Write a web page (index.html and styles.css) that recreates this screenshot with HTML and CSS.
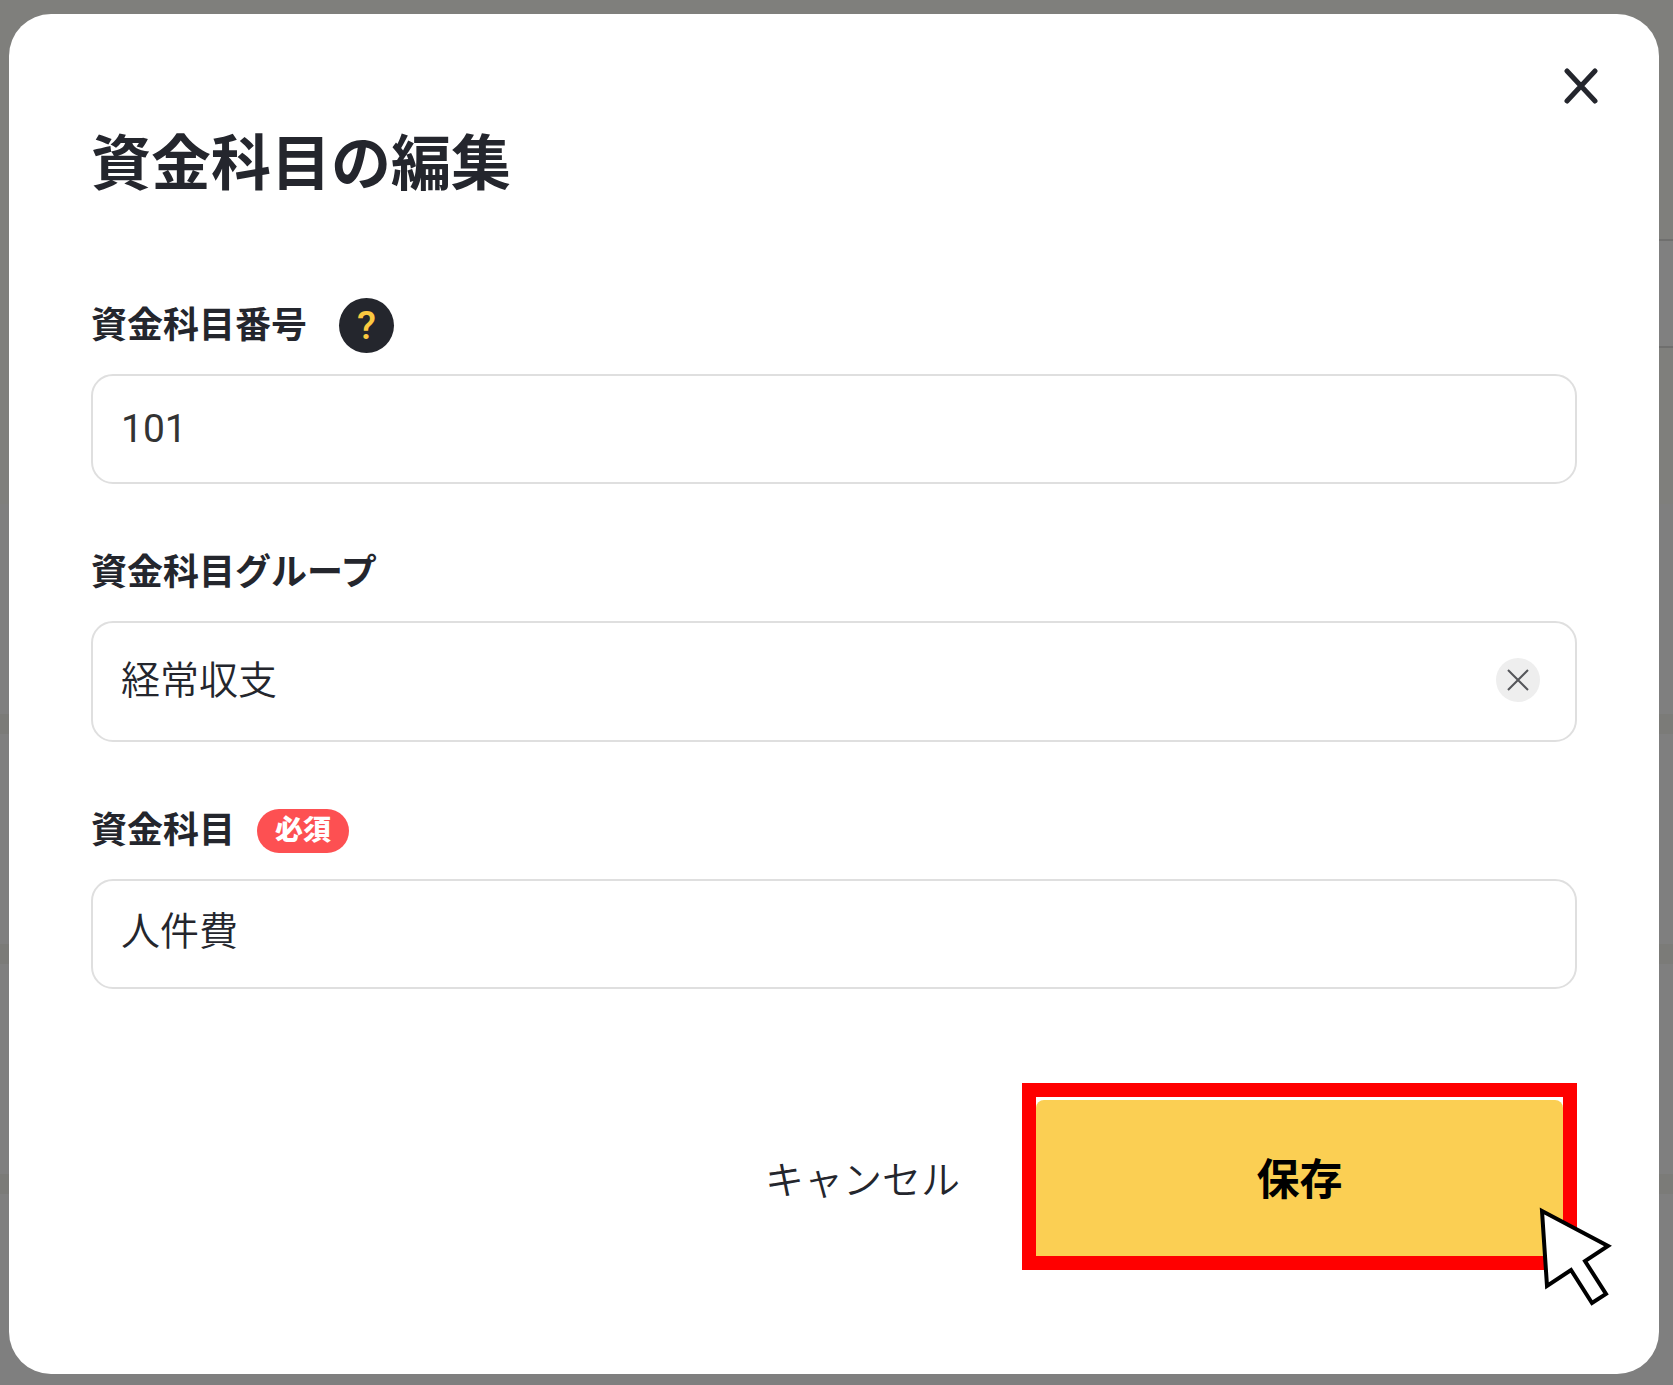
FILE: index.html
```html
<!DOCTYPE html>
<html lang="ja">
<head>
  <meta charset="UTF-8">
  <meta name="viewport" content="width=device-width, initial-scale=1.0">
  <title>資金科目の編集</title>
  <link rel="stylesheet" href="styles.css">
</head>
<body>
  <div class="page">
    <!-- dimmed page behind the dialog -->
    <div class="backdrop">
      <div class="backdrop-head">
        <div class="backdrop-bar"></div>
      </div>
      <div class="backdrop-row"></div>
      <div class="backdrop-row"></div>
      <div class="backdrop-row"></div>
      <div class="backdrop-row last"></div>
    </div>

    <div class="modal" role="dialog" aria-labelledby="modalTitle">
      <button type="button" class="close-btn" aria-label="閉じる">
        <svg width="36" height="36" viewBox="0 0 36 36">
          <path d="M4 3 L32 33 M32 3 L4 33" fill="none" stroke="#24262d" stroke-width="5" stroke-linecap="round"/>
        </svg>
      </button>
      <h1 id="modalTitle">資金科目の編集</h1>

      <form class="edit-form">
        <div class="field">
          <div class="field-head">
            <label for="accountNumber">資金科目番号</label>
            <button type="button" class="help-btn">?</button>
          </div>
          <input type="text" class="control number" id="accountNumber" value="101">
        </div>

        <div class="field">
          <div class="field-head">
            <label for="accountGroup">資金科目グループ</label>
          </div>
          <div class="control combo">
            <input type="text" id="accountGroup" value="経常収支">
            <button type="button" class="clear-btn" aria-label="クリア">
              <svg width="22" height="22" viewBox="0 0 22 22">
                <path d="M1 1 L21 21 M21 1 L1 21" fill="none" stroke="#55565a" stroke-width="2"/>
              </svg>
            </button>
          </div>
        </div>

        <div class="field">
          <div class="field-head">
            <label for="accountName">資金科目</label>
            <span class="badge">必須</span>
          </div>
          <input type="text" class="control" id="accountName" value="人件費" required>
        </div>

        <div class="actions">
          <button type="button" class="cancel-btn">キャンセル</button>
          <div class="save-frame">
            <button type="submit" class="save-btn">保存</button>
            <svg class="cursor" width="76" height="104" viewBox="0 0 76 104">
              <path d="M6 6 L72 41 L49 56 L70 89 L56 98 L35 65 L11 81 Z" fill="#fff" stroke="#000" stroke-width="4"/>
            </svg>
          </div>
        </div>
      </form>
    </div>
  </div>
</body>
</html>
```
FILE: styles.css
```css
* {
  box-sizing: border-box;
}
body {
  margin: 0;
  font-family: Roboto, "Noto Sans CJK JP", sans-serif;
  color: #24262d;
  background: #7f7f7f;
}
button, input {
  font-family: inherit;
  color: inherit;
  border: none;
  background: none;
  padding: 0;
}
button {
  cursor: pointer;
}
svg {
  display: block;
}
.page {
  display: grid;
  min-height: 100vh;
}
.backdrop, .modal {
  grid-area: 1 / 1;
}

/* backdrop */
.backdrop {
  display: flex;
  flex-direction: column;
  background: #7b7b78;
}
.backdrop-head {
  height: 504px;
  padding-top: 239px;
  background: #7f7f7c;
}
.backdrop-bar {
  height: 109px;
  margin-left: 50%;
  background: #808080;
  border-top: 2px solid #6f6f6e;
  border-bottom: 2px solid #6f6f6e;
}
.backdrop-row {
  height: 210px;
  background: #7f7f7f;
}
.backdrop-row + .backdrop-row {
  margin-top: 20px;
}
.backdrop-row.last {
  flex: 1;
}

/* dialog */
.modal {
  display: flex;
  flex-direction: column;
  align-self: start;
  margin: 14px 14px 10px 9px;
  padding: 42px 82px 104px;
  background: #fff;
  border-radius: 42px;
}
.close-btn {
  display: flex;
  align-items: center;
  justify-content: center;
  align-self: flex-end;
  width: 60px;
  height: 60px;
  margin-right: -34px;
}
h1 {
  margin: 9px 0 93px;
  font-size: 60px;
  font-weight: 700;
  line-height: 80px;
}

/* fields */
.edit-form {
  display: flex;
  flex-direction: column;
  gap: 61px;
}
.field {
  display: flex;
  flex-direction: column;
  gap: 21px;
}
.field-head {
  display: flex;
  align-items: center;
  height: 55px;
}
label {
  font-size: 36px;
  font-weight: 700;
  line-height: 52px;
}
.help-btn {
  width: 55px;
  height: 55px;
  margin-left: 32px;
  padding-top: 2px;
  border-radius: 50%;
  background: #24262d;
  color: #fbc940;
  font-size: 39px;
  font-weight: 500;
  line-height: 53px;
}
.badge {
  margin-left: 22px;
  padding: 0 18px;
  border-radius: 22px;
  background: #fd5052;
  color: #fff;
  font-size: 28px;
  font-weight: 900;
  line-height: 44px;
}
.control {
  width: 100%;
  height: 110px;
  padding: 0 28px 12px;
  border: 2px solid #dfdfdf;
  border-radius: 22px;
  font-size: 39px;
  font-weight: 350;
}
.number {
  padding-bottom: 0;
  color: #333;
  font-weight: 400;
}
.combo {
  display: flex;
  align-items: center;
  height: 121px;
  padding-right: 35px;
  padding-bottom: 4px;
}
.combo input {
  flex: 1;
  min-width: 0;
  padding-bottom: 6px;
  font-size: 39px;
  font-weight: 350;
}
.clear-btn {
  display: flex;
  align-items: center;
  justify-content: center;
  width: 44px;
  height: 44px;
  border-radius: 50%;
  background: #eee;
}

/* buttons */
.actions {
  display: flex;
  align-items: center;
  justify-content: flex-end;
  gap: 62px;
  margin-top: 33px;
}
.cancel-btn {
  font-size: 39px;
  font-weight: 350;
}
.save-frame {
  position: relative;
  width: 555px;
  height: 187px;
  padding-top: 3px;
  border: 14px solid #f00;
}
.save-btn {
  width: 100%;
  height: 100%;
  padding-bottom: 4px;
  border-radius: 8px 8px 0 0;
  background: #fbcf53;
  color: #000;
  font-size: 43px;
  font-weight: 700;
}
.cursor {
  position: absolute;
  right: -49px;
  bottom: -53px;
}
```
